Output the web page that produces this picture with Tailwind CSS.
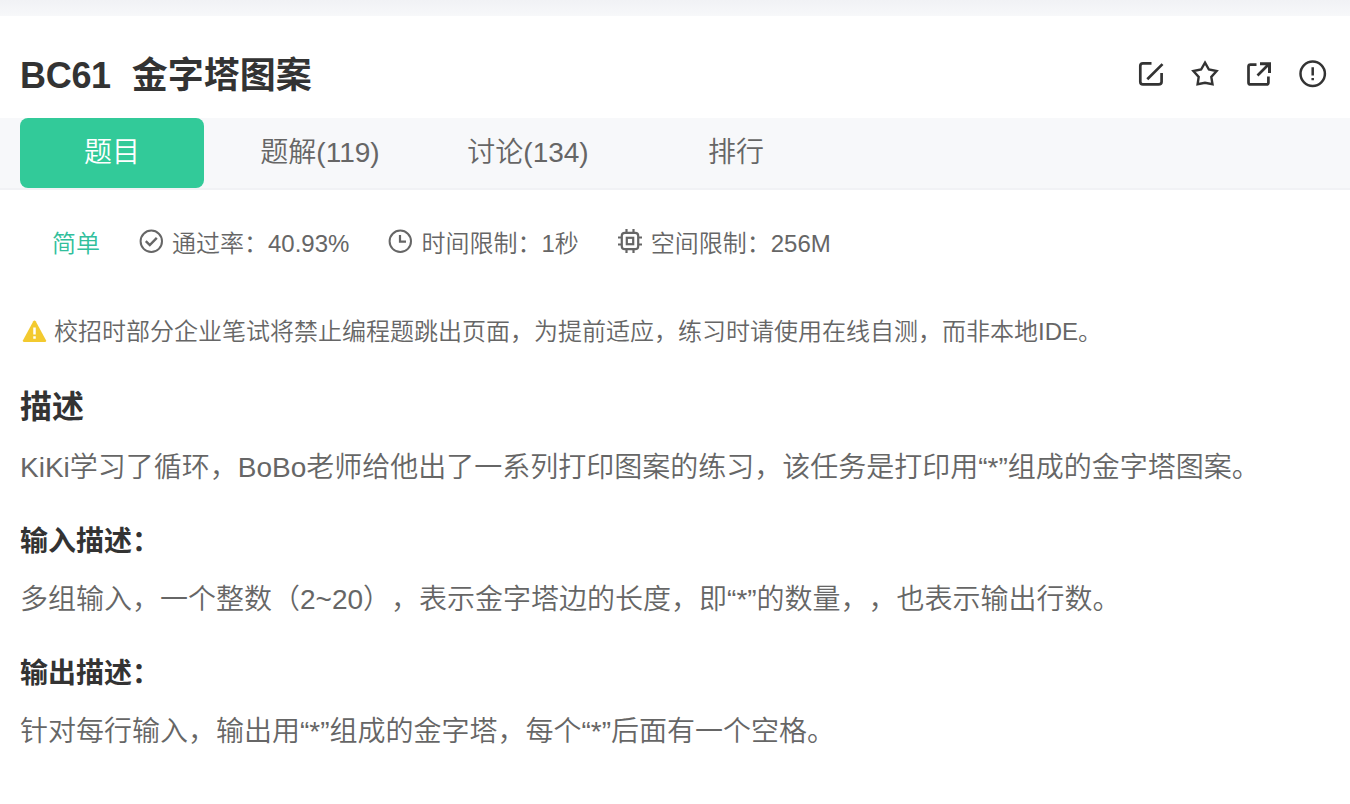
<!DOCTYPE html>
<html lang="zh-CN">
<head>
  <meta charset="UTF-8">
  <meta name="viewport" content="width=device-width, initial-scale=1.0">
  <title>BC61 金字塔图案</title>
  <script src="https://cdn.jsdelivr.net/npm/@tailwindcss/browser@4"></script>
  <style>
    body {
      font-family: 'Liberation Sans', 'Noto Sans CJK SC', sans-serif;
      text-spacing-trim: space-all;
    }
  </style>
</head>
<body class="bg-white font-[350] text-[#666] overflow-hidden">
  <div class="h-4 bg-linear-to-b from-[#f1f2f5] to-[#f7f8fa]"></div>

  <!-- Title -->
  <header class="flex h-[102px] items-center justify-between pt-4 pl-5 pr-[22px] text-[#333]">
    <h1 class="flex gap-[21px] pt-px text-4xl font-bold"><span class="tracking-[-0.3px]">BC61</span><span>金字塔图案</span></h1>
    <div class="flex gap-[24px] pb-[3px]">
      <svg class="size-[30px]" viewBox="0 0 30 30" fill="none" stroke="currentColor" stroke-width="2.7">
        <path d="M15.500 4.300H7Q4.300 4.300 4.300 7v15.700Q4.300 25.400 7 25.400h15.500Q25.600 25.400 25.600 22.700V14M11.300 20.300 26.500 5.100"/>
      </svg>
      <svg class="size-[30px]" viewBox="0 0 30 30" fill="none" stroke="currentColor" stroke-width="2.4">
        <path d="M15 3.600 18.900 10.500 26.600 12 21.300 17.900 22.500 25.300 15 23.800 7.600 25.300 8.700 17.900 3.400 12 11.100 10.500Z"/>
      </svg>
      <svg class="size-[30px]" viewBox="0 0 30 30" fill="none" stroke="currentColor" stroke-width="2.700">
        <path d="M12.500 5.600H6.500Q4.500 5.600 4.500 7.600v15.800Q4.500 25.400 6.500 25.400h15.900Q24.400 25.400 24.400 23.400V17.500M13.500 16.500 24.500 5.500"/>
        <path d="M16 3.200h11V14h-3V8.200L21.300 6.200H16z" fill="currentColor" stroke="none"/>
      </svg>
      <svg class="size-[30px]" viewBox="0 0 30 30" fill="none" stroke="currentColor" stroke-width="2.500">
        <circle cx="14.700" cy="14.700" r="12.200"/>
        <path d="M14.700 8.200v8.200M14.700 19v2.300"/>
      </svg>
    </div>
  </header>

  <!-- Tabs -->
  <nav class="flex h-[72px] gap-6 border-b-2 border-[#f1f2f5] bg-[#f7f8fa] pl-5 text-[28px] leading-[70px] text-center">
    <a class="w-[184px] rounded-lg bg-[#32ca99] text-white">题目</a>
    <a class="w-[184px]">题解(119)</a>
    <a class="w-[184px]">讨论(134)</a>
    <a class="w-[184px]">排行</a>
  </nav>

  <main class="px-5">
    <!-- Limits -->
    <div class="mt-9 flex h-9 gap-[39px] pl-8 text-2xl leading-9">
      <span class="text-[#32bf9c]">简单</span>
      <span class="flex gap-[9px]">
        <svg class="mt-[3px] size-6" viewBox="0 0 24 24" fill="none" stroke="currentColor" stroke-width="2">
          <circle cx="12.300" cy="12.300" r="10.700"/>
          <path d="m6.800 12.100 4 4 7-7.300" stroke-width="2.400"/>
        </svg>
        通过率：40.93%
      </span>
      <span class="flex gap-[9px]">
        <svg class="mt-[3px] size-6" viewBox="0 0 24 24" fill="none" stroke="currentColor" stroke-width="2">
          <circle cx="12.300" cy="12.300" r="10.700"/>
          <path d="M12 6v6.600h6" stroke-width="2.200"/>
        </svg>
        时间限制：1秒
      </span>
      <span class="flex gap-[9px]">
        <svg class="mt-[3px] size-6" viewBox="0 0 24 24" fill="none" stroke="currentColor" stroke-width="2.200">
          <rect x="3.800" y="3.800" width="16.400" height="16.400" rx="3"/>
          <rect x="8.800" y="8.800" width="6.400" height="6.400"/>
          <path d="M8.500 0v4M15.500 0v4M8.500 20v4M15.500 20v4M0 8.500h4M0 15.500h4M20 8.500h4M20 15.500h4"/>
        </svg>
        空间限制：256M
      </span>
    </div>

    <!-- Notice -->
    <p class="mt-[52px] flex h-9 gap-[7px] pl-[2px] text-2xl leading-9">
      <svg class="mt-[5px] size-[25px]" viewBox="0 0 25 25">
        <path d="M12.500 1.500q.7 0 1.200.8L24 21.300q.8 1.700-1 1.700H2q-1.800 0-1-1.700L11.300 2.300q.5-.8 1.200-.8z" fill="#f3ca2f"/>
        <path d="M12.500 8.500v7M12.500 17.300v2.500" stroke="#fff" stroke-width="2.500"/>
      </svg>
      校招时部分企业笔试将禁止编程题跳出页面，为提前适应，练习时请使用在线自测，而非本地IDE。
    </p>

    <h2 class="mt-[33px] text-[32px] leading-[48px] font-bold text-[#333]">描述</h2>
    <p class="mt-[13px] text-[28px] leading-[48px]">KiKi学习了循环，BoBo老师给他出了一系列打印图案的练习，该任务是打印用“*”组成的金字塔图案。</p>

    <h3 class="mt-[30px] text-[28px] leading-10 font-bold text-[#333]">输入描述：</h3>
    <p class="mt-3.5 text-[28px] leading-[48px]">多组输入，一个整数（2~20），表示金字塔边的长度，即“*”的数量，，也表示输出行数。</p>

    <h3 class="mt-[30px] text-[28px] leading-10 font-bold text-[#333]">输出描述：</h3>
    <p class="mt-3.5 text-[28px] leading-[48px]">针对每行输入，输出用“*”组成的金字塔，每个“*”后面有一个空格。</p>
  </main>
</body>
</html>
